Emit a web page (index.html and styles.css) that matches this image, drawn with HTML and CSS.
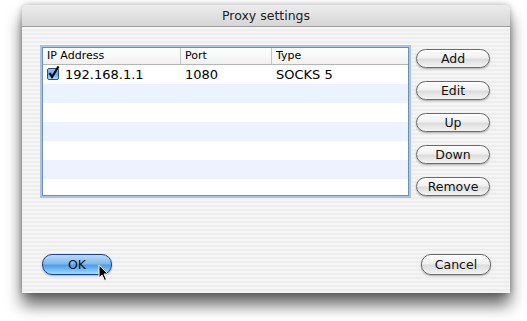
FILE: index.html
```html
<!DOCTYPE html>
<html lang="en">
<head>
    <meta charset="UTF-8">
    <title>Proxy settings</title>
    <link rel="stylesheet" href="styles.css">
</head>
<body>
    <div class="window">
        <div class="title-bar">Proxy settings</div>

        <div class="window-body">
            <div class="top-section">
                <div class="table-frame">
                    <div class="table-header">
                        <div class="col col-ip">IP Address</div>
                        <div class="col col-port">Port</div>
                        <div class="col col-type">Type</div>
                    </div>
                    <div class="row">
                        <div class="col col-ip">
                            <svg class="checkbox" width="13" height="14" viewBox="0 0 13 14">
                                <defs>
                                    <linearGradient id="cbFill" x1="0" y1="0" x2="0" y2="1">
                                        <stop offset="0" stop-color="#9ccdf7"/>
                                        <stop offset="0.5" stop-color="#5aa6ec"/>
                                        <stop offset="1" stop-color="#b4e6ff"/>
                                    </linearGradient>
                                </defs>
                                <rect x="0.5" y="2.5" width="11" height="11" rx="1.5" fill="url(#cbFill)" stroke="#2b4f86"/>
                                <path d="M2.5 7 L5 11 L11.5 0.5" fill="none" stroke="#000" stroke-width="2.2"/>
                            </svg>
                            192.168.1.1
                        </div>
                        <div class="col col-port">1080</div>
                        <div class="col col-type">SOCKS 5</div>
                    </div>
                    <div class="row stripe"></div>
                    <div class="row"></div>
                    <div class="row stripe"></div>
                    <div class="row"></div>
                    <div class="row stripe"></div>
                    <div class="row"></div>
                </div>

                <div class="side-buttons">
                    <button class="aqua-button">Add</button>
                    <button class="aqua-button">Edit</button>
                    <button class="aqua-button">Up</button>
                    <button class="aqua-button">Down</button>
                    <button class="aqua-button">Remove</button>
                </div>
            </div>

            <div class="bottom-row">
                <div class="ok-wrap">
                    <button class="aqua-button default-button">OK</button>
                    <!-- mouse pointer resting on the OK button -->
                    <svg class="cursor" width="12" height="18" viewBox="0 0 12 18">
                        <path d="M1 1 L1 14 L4 11 L6.5 16.5 L8.5 15.5 L6 10 L10 10 Z" fill="#000" stroke="#fff" stroke-width="1"/>
                    </svg>
                </div>
                <button class="aqua-button">Cancel</button>
            </div>
        </div>
    </div>
</body>
</html>
```

FILE: styles.css
```css
body {
    margin: 0;
    padding: 5px 0 0 22px;
    min-height: 321px;
    box-sizing: border-box;
    background-color: #ffffff;
    font-family: 'DejaVu Sans', sans-serif;
    color: #000;
}

.window {
    width: 488px;
    height: 288px;
    border-radius: 6px 6px 0 0;
    overflow: hidden;
    display: flex;
    flex-direction: column;
    box-shadow: 0 12px 16px rgba(0, 0, 0, 0.6), 0 0 6px rgba(0, 0, 0, 0.3);
    background: repeating-linear-gradient(to bottom, #ededed 0, #ededed 2px, #f5f5f5 2px, #f5f5f5 4px);
}

.title-bar {
    height: 22px;
    line-height: 22px;
    text-align: center;
    font-size: 12.5px;
    color: #222;
    background: linear-gradient(to bottom, #ececec, #d6d6d6);
    border-bottom: 1px solid #9e9e9e;
    box-sizing: border-box;
}

.window-body {
    flex: 1;
    display: flex;
    flex-direction: column;
    justify-content: space-between;
    padding: 19px 19px 18px 19px;
}

.top-section {
    display: flex;
    gap: 7px;
}

.table-frame {
    width: 365px;
    height: 147px;
    background: #fff;
    border: 1px solid #6f8fb5;
    box-shadow: 0 0 0 2px #a9c4e2;
    margin: 1px 0 0 1px;
    overflow: hidden;
}

.table-header {
    display: flex;
    height: 17px;
    line-height: 16px;
    font-size: 11px;
    background: linear-gradient(to bottom, #ffffff, #f0f0f0);
    border-bottom: 1px solid #b5b5b5;
    box-sizing: border-box;
}

.table-header .col {
    border-right: 1px solid #c4c4c4;
    padding-left: 4px;
    box-sizing: border-box;
}

.table-header .col-type {
    border-right: none;
}

.row {
    display: flex;
    height: 19px;
    line-height: 19px;
    font-size: 13px;
}

.row .col {
    padding-left: 4px;
    box-sizing: border-box;
}

.stripe {
    background-color: #edf3fe;
}

.col-ip {
    width: 138px;
    display: flex;
    align-items: center;
    gap: 5px;
}

.col-port {
    width: 91px;
}

.col-type {
    flex: 1;
}

.checkbox {
    flex-shrink: 0;
    margin-top: -3px;
}

.side-buttons {
    display: flex;
    flex-direction: column;
    gap: 13px;
    padding-top: 3px;
}

.aqua-button {
    width: 74px;
    height: 19px;
    padding: 0;
    font-family: 'DejaVu Sans', sans-serif;
    font-size: 12.5px;
    font-weight: 400;
    color: #111;
    border: 1px solid #6a6a6a;
    border-radius: 10px;
    background: linear-gradient(to bottom, #fdfdfd 0%, #f0f0f0 45%, #dcdcdc 55%, #f4f4f4 100%);
    box-shadow: 0 1px 2px rgba(0, 0, 0, 0.3);
    cursor: pointer;
}

.bottom-row {
    display: flex;
    justify-content: space-between;
    align-items: flex-end;
    padding-left: 1px;
}

.bottom-row .aqua-button {
    width: 70px;
    height: 21px;
}

.ok-wrap {
    position: relative;
}

.default-button {
    border-color: #1f3f8a;
    background: linear-gradient(to bottom, #b8dcfb 0%, #7fbaf0 45%, #4f9de8 55%, #9fdcff 100%);
}

.cursor {
    position: absolute;
    left: 56px;
    top: 10px;
}
```
